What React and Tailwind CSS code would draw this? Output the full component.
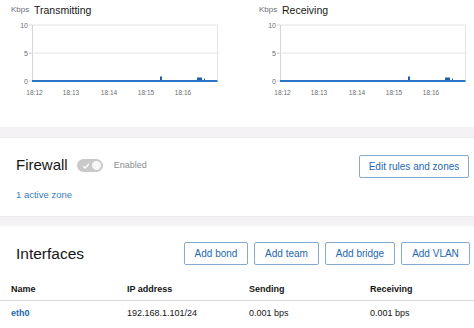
const spikes = "M21 63 L149 63 L149 58.5 L151 58.5 L151 63 L186 63 L186 59.5 L191 59.5 L191 63 L193 63 L193 60.5 L194 60.5 L194 63 L206 63";

function Chart({ title }) {
  return (
    <div className="w-[207px] pt-[4px]">
      <div className="flex items-center h-[12px] leading-[12px]">
        <span className="text-[8px] text-[#6a6e73] w-[23px]">Kbps</span>
        <span className="text-[10.5px] text-[#151515]">{title}</span>
      </div>
      <svg width="207" height="86" className="mt-[2px] block">
        <line x1="21" y1="7" x2="206.5" y2="7" stroke="#e4e4e4" />
        <line x1="21" y1="35" x2="206.5" y2="35" stroke="#e4e4e4" />
        <line x1="21.5" y1="7" x2="21.5" y2="63" stroke="#d6d6d6" />
        <line x1="206.5" y1="7" x2="206.5" y2="63" stroke="#e4e4e4" />
        <line x1="18" y1="7" x2="21" y2="7" stroke="#d6d6d6" />
        <line x1="18" y1="35" x2="21" y2="35" stroke="#d6d6d6" />
        <line x1="18" y1="63" x2="21" y2="63" stroke="#d6d6d6" />
        <g fontSize="7" fill="#6a6e73" fontFamily="Liberation Sans, sans-serif" textAnchor="end">
          <text x="17" y="9.5">10</text>
          <text x="17" y="37.5">5</text>
          <text x="17" y="65.5">0</text>
        </g>
        <g fontSize="6.5" fill="#6a6e73" fontFamily="Liberation Sans, sans-serif" textAnchor="middle">
          <text x="23.5" y="76.5">18:12</text>
          <text x="60" y="76.5">18:13</text>
          <text x="98" y="76.5">18:14</text>
          <text x="135" y="76.5">18:15</text>
          <text x="172" y="76.5">18:16</text>
        </g>
        <path d={spikes + " L206 64 L21 64 Z"} fill="#1d5fa8" />
        <line x1="21" y1="63" x2="206.5" y2="63" stroke="#2b75c6" strokeWidth="1.8" />
      </svg>
    </div>
  );
}

function Btn({ w, children }) {
  return (
    <button className={`${w} h-[23px] border border-[#86a9cf] rounded-[2px] text-[10px] text-[#2468b1] leading-none bg-white`}>
      {children}
    </button>
  );
}

export default function App() {
  return (
    <div className="w-[474px] h-[328px] overflow-hidden bg-white" style={{ fontFamily: "'Liberation Sans', Arial, sans-serif" }}>
      <section className="h-[127px] flex pl-[11px] gap-[41px]">
        <Chart title="Transmitting" />
        <Chart title="Receiving" />
      </section>
      <div className="h-[10px] bg-[#f4f2f4]" />
      <section className="h-[80px] pl-[16px] pr-[5px] pt-[16px] border-y border-[#ececec]">
        <div className="flex items-center h-[23px]">
          <span className="text-[15px] text-[#151515]">Firewall</span>
          <div className="ml-[9px] w-[26px] h-[13px] rounded-full bg-[#c9c9c9] relative">
            <svg width="8" height="8" viewBox="0 0 8 8" className="absolute left-[5px] top-[2.5px]">
              <path d="M1.2 4.2 L3.1 6 L6.8 2" stroke="#ffffff" strokeWidth="1.3" fill="none" />
            </svg>
            <div className="absolute right-[2px] top-[2px] w-[9px] h-[9px] rounded-full bg-[#f6f6f6]" />
          </div>
          <span className="ml-[11px] text-[9px] text-[#8a8d90]">Enabled</span>
          <div className="ml-auto">
            <Btn w="w-[110px]">Edit rules and zones</Btn>
          </div>
        </div>
        <div className="mt-[11px] h-[14px] leading-[14px] text-[9.5px] text-[#3b7cc0]">1 active zone</div>
      </section>
      <div className="h-[9px] bg-[#f4f2f4]" />
      <section className="pt-[16px]">
        <div className="flex items-center h-[23px] pl-[16px] pr-[4px]">
          <span className="text-[15.5px] text-[#151515]">Interfaces</span>
          <div className="ml-auto flex gap-[6px]">
            <Btn w="w-[64px]">Add bond</Btn>
            <Btn w="w-[65px]">Add team</Btn>
            <Btn w="w-[70px]">Add bridge</Btn>
            <Btn w="w-[69px]">Add VLAN</Btn>
          </div>
        </div>
        <div className="mt-[14px] flex items-center h-[22px] pl-[11px] border-b border-[#d8d8d8] text-[9px] font-bold text-[#151515]">
          <div className="w-[116px]">Name</div>
          <div className="w-[122px]">IP address</div>
          <div className="w-[121px]">Sending</div>
          <div>Receiving</div>
        </div>
        <div className="flex items-center h-[26px] pl-[11px] text-[9px] text-[#151515]">
          <div className="w-[116px] font-bold text-[#2468b1]">eth0</div>
          <div className="w-[122px]">192.168.1.101/24</div>
          <div className="w-[121px]">0.001 bps</div>
          <div>0.001 bps</div>
        </div>
      </section>
    </div>
  );
}
